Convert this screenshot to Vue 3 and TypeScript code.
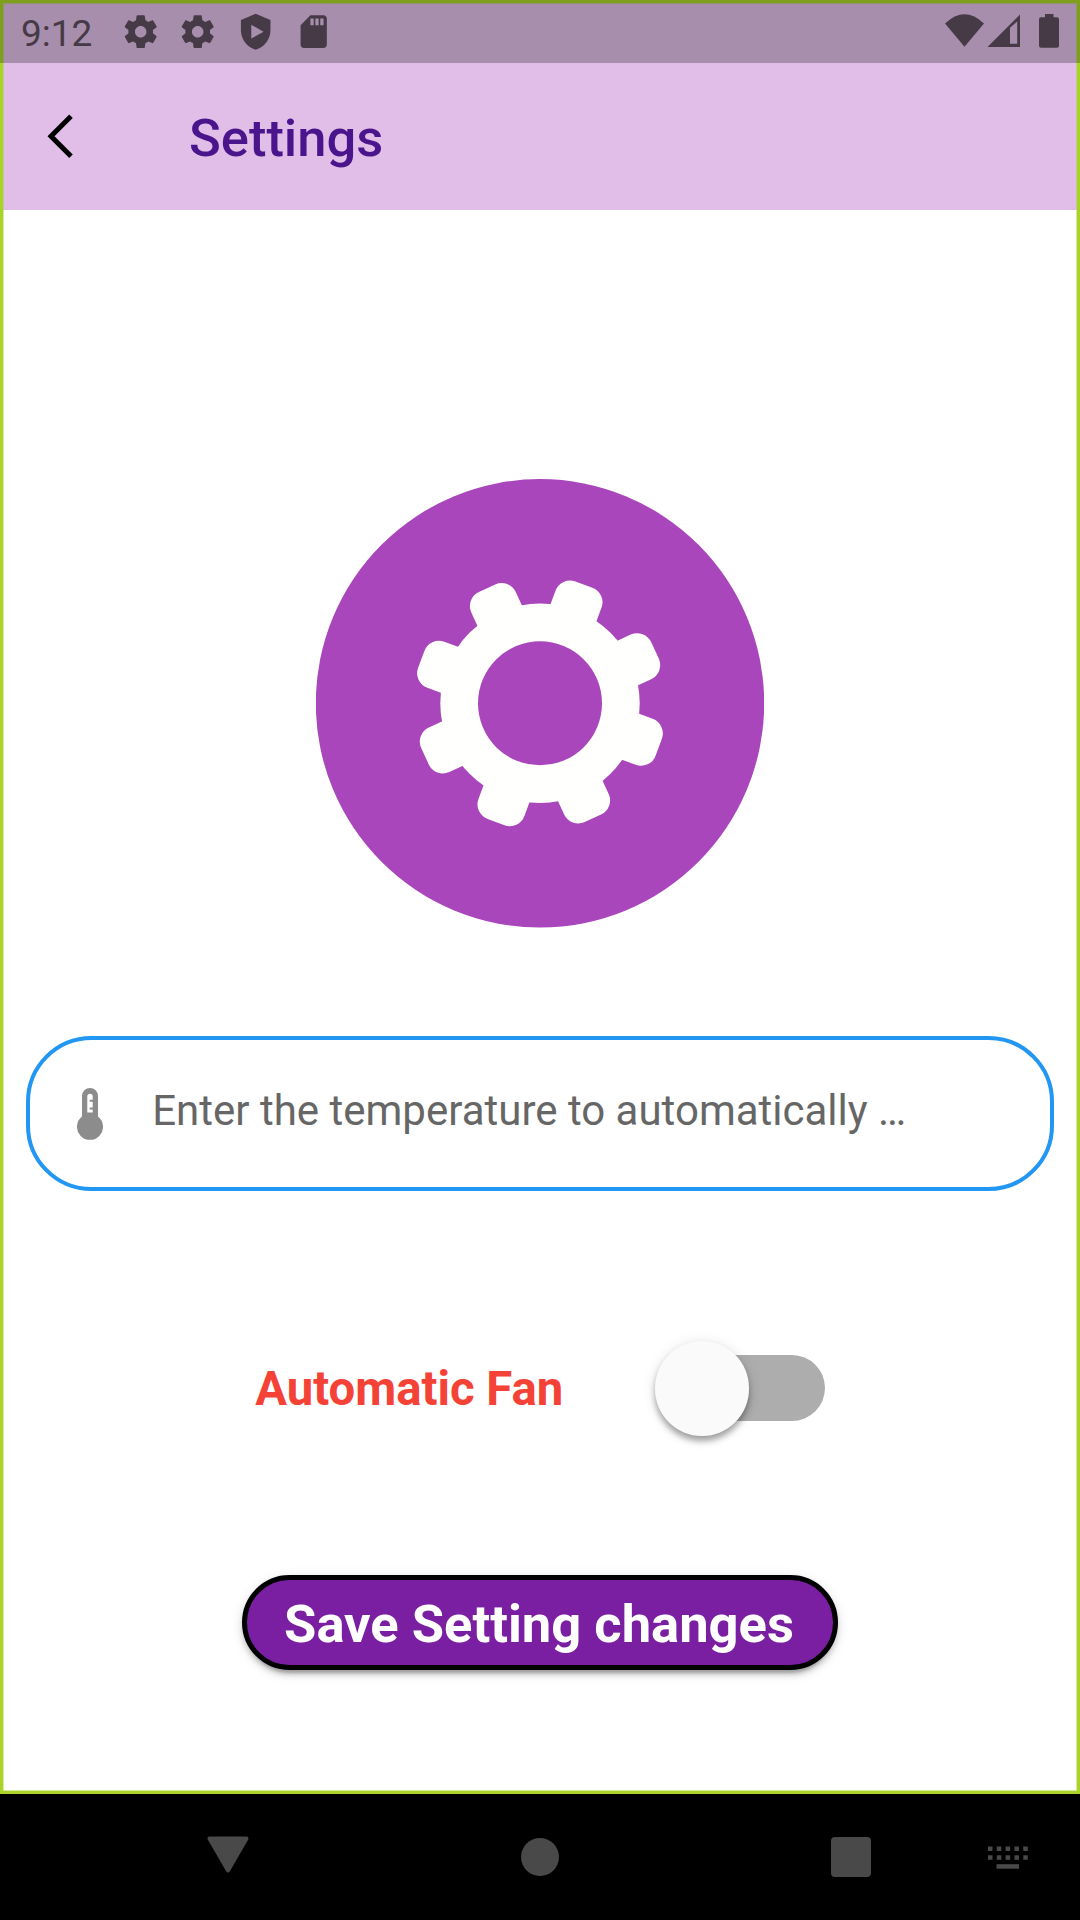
<script setup lang="ts">
import { ref } from 'vue'

const title = 'Settings'
const clock = '9:12'
const hint = 'Enter the temperature to automatically …'
const automaticFan = ref(false)
const teeth = Array.from({ length: 8 }, (_, i) => 20.3 + i * 45)
const keys = [0, 9, 18, 27, 36]
</script>

<template>
  <div class="screen">
    <div class="app">
      <div class="status">
        <span class="clock">{{ clock }}</span>
        <div class="notices">
          <svg v-for="n in 2" :key="n" viewBox="0 0 24 24" class="notice">
            <path d="M19.43 12.98c.04-.32.07-.64.07-.98s-.03-.66-.07-.98l2.11-1.65c.19-.15.24-.42.12-.64l-2-3.46c-.12-.22-.39-.3-.61-.22l-2.49 1c-.52-.4-1.08-.73-1.69-.98l-.38-2.65C14.46 2.18 14.25 2 14 2h-4c-.25 0-.46.18-.49.42l-.38 2.65c-.61.25-1.17.59-1.69.98l-2.49-1c-.23-.09-.49 0-.61.22l-2 3.46c-.13.22-.07.49.12.64l2.11 1.65c-.04.32-.07.65-.07.98s.03.66.07.98l-2.11 1.65c-.19.15-.24.42-.12.64l2 3.46c.12.22.39.3.61.22l2.49-1c.52.4 1.08.73 1.69.98l.38 2.65c.03.24.24.42.49.42h4c.25 0 .46-.18.49-.42l.38-2.65c.61-.25 1.17-.59 1.69-.98l2.49 1c.23.09.49 0 .61-.22l2-3.46c.12-.22.07-.49-.12-.64l-2.11-1.65zM12 15.5c-1.93 0-3.5-1.57-3.5-3.5s1.57-3.5 3.5-3.5 3.5 1.57 3.5 3.5-1.57 3.5-3.5 3.5z" />
          </svg>
          <svg viewBox="0 0 24 24" class="notice">
            <path fill-rule="evenodd" d="M12 1L3 4.9v6.2c0 5.5 3.8 10.4 9 11.9 5.2-1.5 9-6.4 9-11.900V4.9zM9.300 7.800l7.500 4.200-7.500 4.200z" />
          </svg>
          <svg viewBox="0 0 24 24" class="notice">
            <path d="M18 2h-8L4.020 8 4 20c0 1.100.9 2 2 2h12c1.100 0 2-.9 2-2V4c0-1.100-.9-2-2-2zm-6 6h-2V4h2v4zm3 0h-2V4h2v4zm3 0h-2V4h2v4z" />
          </svg>
        </div>
        <svg class="system" viewBox="0 0 120 40" width="120" height="40">
          <path d="M5 11.500Q24.500-7 44 11.500L24.500 34.700Z" />
          <path fill-rule="evenodd" d="M47.500 35L80 2.500V35ZM70 15.700V31.700H77.200V9.500Z" />
          <path d="M105 2h8.500v3.300h3.500q2 0 2 2v26.400q0 2-2 2h-16q-2 0-2-2V7.300q0-2 2-2h4z" />
        </svg>
      </div>

      <header class="bar">
        <svg class="back" viewBox="0 0 28 44" width="28" height="44">
          <path d="M24 2.200L4 22.200L24 42.200" fill="none" stroke="#000" stroke-width="5" />
        </svg>
        <h1>{{ title }}</h1>
      </header>

      <main>
        <svg class="gear" viewBox="-224 -224.300 448 449" width="448" height="449">
          <circle r="224.200" fill="#a946bb" />
          <g fill="#fffffe">
            <circle r="99.700" />
            <rect v-for="a in teeth" :key="a" x="-24.500" y="-126.600" width="49" height="52" rx="15.500" :transform="`rotate(${a})`" />
          </g>
          <circle r="62" fill="#a946bb" />
        </svg>

        <label class="field">
          <svg class="thermo" viewBox="0 0 26 54" width="26" height="54">
            <path fill-rule="evenodd" d="M5 8a8 8 0 0 1 16 0V28.600a13 13 0 1 1-16 0ZM10.300 24.600h5.400v-3.200h-3v-2h3v-5.600h-3v-2h3V8.500a2.700 2.700 0 0 0-5.400 0Z" fill="#8c8c8c" />
          </svg>
          <span>{{ hint }}</span>
        </label>

        <div class="fan">
          <span>Automatic Fan</span>
          <button class="switch" role="switch" :aria-checked="automaticFan" @click="automaticFan = !automaticFan">
            <i class="track"></i>
            <i class="thumb"></i>
          </button>
        </div>

        <button class="save">Save Setting changes</button>
      </main>
    </div>

    <nav>
      <svg class="navback" viewBox="0 0 42 38" width="42" height="38">
        <path d="M2.500 2.500H39.500L21 34.500Z" fill="#494949" stroke="#494949" stroke-width="4" stroke-linejoin="round" />
      </svg>
      <i class="home"></i>
      <i class="recent"></i>
      <svg class="keyboard" viewBox="0 0 40 23" width="40" height="23" fill="#494949">
        <template v-for="x in keys" :key="x">
          <rect :x="x * 0.98" y="0.500" width="4.500" height="4.500" />
          <rect :x="x * 0.98" y="9.300" width="4.500" height="4.500" />
        </template>
        <rect x="8.500" y="18.200" width="22.500" height="4.500" />
      </svg>
    </nav>
  </div>
</template>

<style>
body {
  margin: 0;
}
</style>

<style scoped>
.screen {
  width: 1080px;
  height: 1920px;
  display: flex;
  flex-direction: column;
  background: #000;
  font-family: Roboto, "Liberation Sans", sans-serif;
  overflow: hidden;
}
.app {
  position: relative;
  height: 1794px;
  background: #fff;
  display: flex;
  flex-direction: column;
}
.app::after {
  content: "";
  position: absolute;
  inset: 0;
  z-index: 1;
  pointer-events: none;
  box-shadow: inset 0 0 0 3px #a8d328, inset 0 0 0 4px rgba(168, 211, 40, 0.45);
}
.status {
  position: absolute;
  inset: 0 0 auto 0;
  z-index: 2;
  height: 63px;
  display: flex;
  align-items: center;
  box-sizing: border-box;
  padding: 0 20px 0 21px;
  background: rgba(0, 0, 0, 0.25);
  color: #463a47;
  fill: #463a47;
}
.clock {
  width: 99.500px;
  font-size: 37px;
  line-height: 44px;
  white-space: nowrap;
  margin-top: 5px;
}
.notices {
  display: flex;
  gap: 18.600px;
}
.notice {
  display: block;
  width: 39.400px;
  height: 39.400px;
}
.system {
  margin-left: auto;
  margin-top: 1px;
}
.bar {
  box-sizing: border-box;
  height: 210px;
  padding: 63px 0 0 47px;
  display: flex;
  align-items: center;
  background: #e1bee7;
}
.back {
  margin-right: 114px;
  margin-bottom: 1px;
}
h1 {
  margin: 3px 0 0;
  font-size: 52.500px;
  line-height: 62px;
  font-weight: 500;
  color: #4a148c;
}
main {
  flex: 1;
  display: flex;
  flex-direction: column;
  align-items: center;
}
.gear {
  display: block;
  margin-top: 269px;
}
.field {
  box-sizing: border-box;
  width: 1027.500px;
  height: 155px;
  margin-top: 108px;
  border: 4px solid #2196f3;
  border-radius: 65.600px;
  display: flex;
  align-items: flex-start;
  padding: 47px 0 0 46px;
}
.thermo {
  margin: 0.500px 0 0 0.300px;
}
.field span {
  margin: -1px 0 0 49.700px;
  font-size: 42px;
  line-height: 50px;
  color: #666;
  white-space: nowrap;
}
.fan {
  width: 569.500px;
  margin-top: 150px;
  display: flex;
  align-items: center;
  justify-content: space-between;
}
.fan span {
  margin-top: 2px;
  font-size: 47.250px;
  line-height: 56px;
  font-weight: 700;
  color: #f44336;
  white-space: nowrap;
}
.switch {
  display: grid;
  align-items: center;
  width: 170.200px;
  height: 94.500px;
  padding: 0;
  border: 0;
  background: none;
}
.track,
.thumb {
  grid-area: 1 / 1;
}
.track {
  justify-self: end;
  width: 156px;
  height: 66.200px;
  border-radius: 33.100px;
  background: #adadad;
}
.thumb {
  width: 94.500px;
  height: 94.500px;
  border-radius: 50%;
  background: #fafafa;
  box-shadow: 0 6px 6px -1px rgba(0, 0, 0, 0.22), 0 4px 6px rgba(0, 0, 0, 0.14), 0 2px 14px rgba(0, 0, 0, 0.12);
}
.save {
  box-sizing: border-box;
  width: 596px;
  height: 94.500px;
  margin-top: 139.500px;
  padding: 3px 2px 0 0;
  border: 5.250px solid #000;
  border-radius: 48px;
  background: #7b1fa2;
  color: #fff;
  font: 700 52.500px/62px Roboto, "Liberation Sans", sans-serif;
  white-space: nowrap;
  box-shadow: 0 8px 3px -5px rgba(0, 0, 0, 0.2), 0 5px 5px rgba(0, 0, 0, 0.14), 0 3px 13px rgba(0, 0, 0, 0.12);
}
nav {
  height: 126px;
  display: flex;
  align-items: center;
  padding-left: 207px;
}
.navback {
  margin-top: -4px;
}
.home {
  width: 38px;
  height: 38px;
  margin-left: 272px;
  border-radius: 50%;
  background: #494949;
}
.recent {
  width: 40px;
  height: 40px;
  margin-left: 272px;
  border-radius: 4px;
  background: #494949;
}
.keyboard {
  margin-left: 117px;
}
</style>
